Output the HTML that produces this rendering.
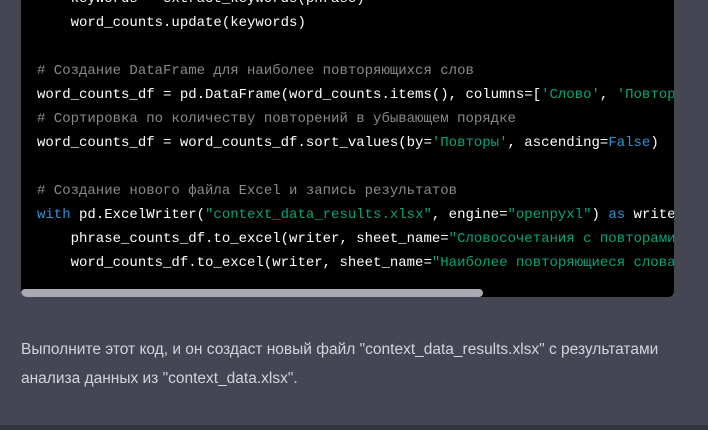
<!DOCTYPE html>
<html><head><meta charset="utf-8"><style>
body{margin:0;width:708px;height:430px;background:#444654;overflow:hidden;position:relative;font-family:"Liberation Sans","DejaVu Sans",sans-serif}
.code{position:absolute;left:21px;top:-13px;width:653px;height:310px;background:#000;border-radius:0 0 6px 6px;overflow:hidden}
pre{margin:0;position:absolute;left:16px;top:0;font-family:"Liberation Mono","DejaVu Sans Mono",monospace;font-size:14px;line-height:24px;color:#fff;white-space:pre}
.c{color:#8a8a8a}.s{color:#00a67d}.k{color:#2e95d3}
.bar{position:absolute;left:0;top:302px;width:462px;height:8px;background:#a9a9b1;border-radius:4px}
p{position:absolute;left:21px;top:336px;margin:0;width:680px;font-size:15.5px;line-height:28.5px;color:#d1d5db}
.bot{position:absolute;left:0;top:425px;width:708px;height:5px;background:#343541}
</style></head><body>
<div class="code"><pre>    keywords = extract_keywords(phrase)
    word_counts.update(keywords)

<span class="c"># Создание DataFrame для наиболее повторяющихся слов</span>
word_counts_df = pd.DataFrame(word_counts.items(), columns=[<span class="s">'Слово'</span>, <span class="s">'Повторы'</span>])
<span class="c"># Сортировка по количеству повторений в убывающем порядке</span>
word_counts_df = word_counts_df.sort_values(by=<span class="s">'Повторы'</span>, ascending=<span class="k">False</span>)

<span class="c"># Создание нового файла Excel и запись результатов</span>
<span class="k">with</span> pd.ExcelWriter(<span class="s">"context_data_results.xlsx"</span>, engine=<span class="s">"openpyxl"</span>) <span class="k">as</span> writer:
    phrase_counts_df.to_excel(writer, sheet_name=<span class="s">"Словосочетания с повторами"</span>, index=False)
    word_counts_df.to_excel(writer, sheet_name=<span class="s">"Наиболее повторяющиеся слова"</span>, index=False)</pre>
<div class="bar"></div></div>
<p>Выполните этот код, и он создаст новый файл "context_data_results.xlsx" с результатами анализа данных из "context_data.xlsx".</p>
<div class="bot"></div>
</body></html>
